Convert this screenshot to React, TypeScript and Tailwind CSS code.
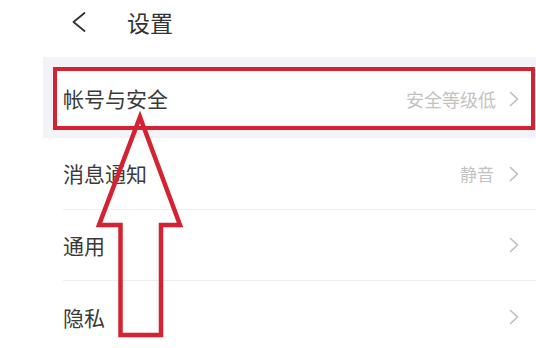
import React from "react";

const Chevron = () => (
  <svg width="10" height="16" viewBox="0 0 10 16" className="shrink-0">
    <polyline points="1.5,1.5 8.5,8 1.5,14.5" fill="none" stroke="#bdbdbd" strokeWidth="1.6" strokeLinecap="round" strokeLinejoin="round" />
  </svg>
);

const Row = ({ label, value, h, border }: { label: string; value?: string; h: string; border: boolean }) => (
  <div className={`flex items-center justify-between pr-[17px] ${h} ${border ? "border-b border-[#efefef]" : ""}`}>
    <span className="text-[21px] leading-none text-[#3a3a3a]">{label}</span>
    <div className="flex items-center gap-[15px]">
      {value ? <span className="text-[17px] leading-none text-[#c2c2c2]">{value}</span> : null}
      <Chevron />
    </div>
  </div>
);

export default function App() {
  return (
    <div className="relative w-[536px] h-[348px] bg-white overflow-hidden font-['Noto_Sans_CJK_SC',sans-serif]">
      <div className="flex items-center h-[57px] pb-[13px] pl-[72px]">
        <svg width="14" height="20" viewBox="0 0 14 20">
          <polyline points="12.5,1 1.5,10 12.5,19" fill="none" stroke="#333" strokeWidth="1.8" strokeLinecap="round" strokeLinejoin="round" />
        </svg>
        <span className="ml-[41px] text-[23px] leading-none text-[#333]">设置</span>
      </div>
      <div className="ml-[43px] bg-[#f3f3f7] pt-[10px] pb-[8px] pl-[10px] pr-[1px]">
        <div className="h-[63px] border-[4px] border-[#d42232] bg-white flex items-center justify-between pl-[6px] pr-[12px]">
          <span className="text-[21px] leading-none text-[#3a3a3a]">帐号与安全</span>
          <div className="flex items-center gap-[13px]">
            <span className="text-[18px] leading-none text-[#c2c2c2]">安全等级低</span>
            <Chevron />
          </div>
        </div>
      </div>
      <div className="pl-[63px]">
        <Row label="消息通知" value="静音" h="h-[72px]" border />
        <Row label="通用" h="h-[71px]" border />
        <Row label="隐私" h="h-[72px]" border={false} />
      </div>
      <svg className="absolute inset-0 pointer-events-none" width="536" height="348" viewBox="0 0 536 348">
        <polygon
          points="140,117 180,225 161,225 161,335 120.5,335 120.5,225 99,225"
          fill="none"
          stroke="#d42232"
          strokeWidth="4.5"
          strokeLinejoin="miter"
        />
      </svg>
    </div>
  );
}
